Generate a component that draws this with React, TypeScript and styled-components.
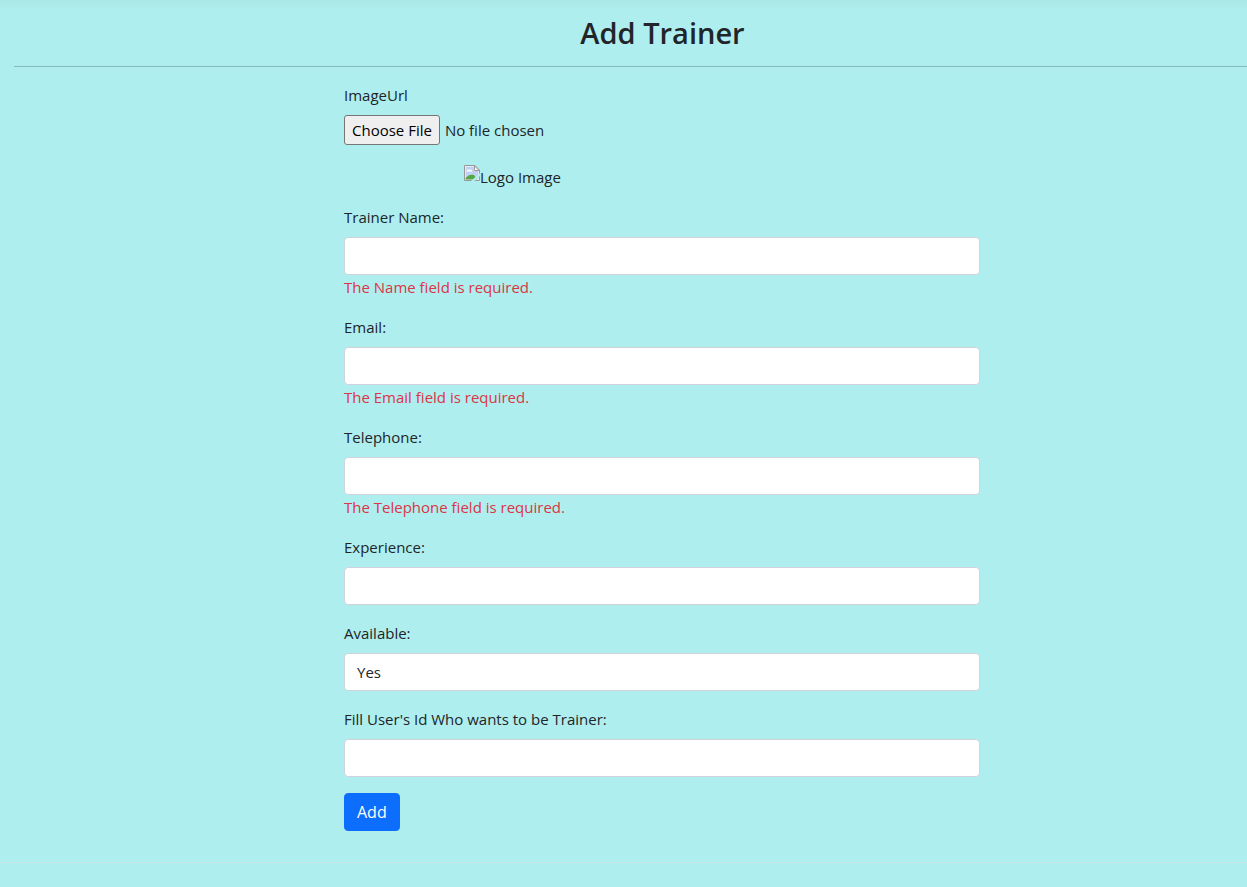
import React from "react";
import styled, { createGlobalStyle } from "styled-components";

const Global = createGlobalStyle`
  *, *::before, *::after { box-sizing: border-box; }
  body {
    margin: 0;
    background: #afeeee;
    color: #212529;
    font: 400 15px/24px "Segoe UI", "Open Sans", "Noto Sans", sans-serif;
  }
`;

const Page = styled.div`
  min-height: 100vh;
  background: linear-gradient(rgba(0, 0, 0, 0.03), transparent 10px);
`;

const Main = styled.main`
  padding: 14px 0 31px 14px;
`;

const Title = styled.h1`
  margin: 0 0 14px;
  padding-left: 64px;
  font-size: 29px;
  line-height: 38px;
  font-weight: 600;
  text-align: center;
`;

const Rule = styled.hr`
  height: 1px;
  margin: 0 0 16px;
  border: 0;
  background: #84bcbd;
`;

const Columns = styled.div`
  display: grid;
  grid-template-columns: 330fr 636fr 267fr;
`;

const Form = styled.form`
  grid-column: 2;
`;

const Group = styled.div`
  margin-bottom: 16px;
`;

const Label = styled.label`
  display: block;
  margin-bottom: 8px;
`;

const FileInput = styled.input`
  display: block;
  width: 100%;
  font: inherit;
  color: inherit;

  &::file-selector-button {
    height: 30px;
    margin-right: 5px;
    padding: 1px 7px;
    border: 1px solid #767676;
    border-radius: 3px;
    background: #efefef;
    color: #000;
    font: inherit;
  }
`;

const Preview = styled.div`
  display: flex;
  margin: 20px 0 16px 120px;
`;

const BrokenIcon = styled.svg`
  flex: none;
`;

const control = `
  display: block;
  width: 100%;
  height: 38px;
  padding: 6px 12px;
  border: 1px solid #ced4da;
  border-radius: 4px;
  background: #fff;
  color: #212529;
  font: inherit;
`;

const Input = styled.input`${control}`;
const Select = styled.select`${control} appearance: none;`;

const ErrorText = styled.span`
  display: block;
  color: #dc3545;
`;

const Button = styled.button`
  height: 38px;
  padding: 6px 12px;
  border: 1px solid #0d6efd;
  border-radius: 4px;
  background: #0d6efd;
  color: #fff;
  font: inherit;
  font-size: 16px;
`;

const Footer = styled.footer`
  height: 24px;
  border-top: 1px solid #c8e5e8;
`;

function Field({ id, label, error, type = "text" }: { id: string; label: string; error?: string; type?: string }) {
  return (
    <Group>
      <Label htmlFor={id}>{label}</Label>
      <Input id={id} type={type} />
      {error && <ErrorText>{error}</ErrorText>}
    </Group>
  );
}

export default function App() {
  return (
    <Page>
      <Global />
      <Main>
        <Title>Add Trainer</Title>
        <Rule />
        <Columns>
          <Form noValidate onSubmit={(e) => e.preventDefault()}>
            <Label htmlFor="image">ImageUrl</Label>
            <FileInput id="image" type="file" />
            <Preview>
              <BrokenIcon width="16" height="16" viewBox="0 0 16 16" aria-hidden="true">
                <path d="M.5.5H11L15.5 5v10.500H.5z" fill="#fff" />
                <path d="M1.500 1.500h9V6H14.500v8.500h-13z" fill="#c1d1f3" />
                <path d="M2.500 6.500c0-2 2-2.500 2.500-1.500 1.500-1.500 3.500 0 3 1.500z" fill="#fff" />
                <path d="M1.500 14.500v-1c1.500-3 5-4.500 8.500-3.500l3 4.500z" fill="#53a93f" />
                <path d="M.5 15.500V.5H11L15.500 5v10.500z" fill="none" stroke="#999" />
                <path d="M10.500 1v4.500H15z" fill="#fff" stroke="#999" />
                <path d="M7 16L16 8v3L10.500 16z" fill="#afeeee" />
              </BrokenIcon>
              <span>Logo Image</span>
            </Preview>
            <Field id="name" label="Trainer Name:" error="The Name field is required." />
            <Field id="email" label="Email:" type="email" error="The Email field is required." />
            <Field id="telephone" label="Telephone:" type="tel" error="The Telephone field is required." />
            <Field id="experience" label="Experience:" />
            <Group>
              <Label htmlFor="available">Available:</Label>
              <Select id="available" defaultValue="Yes">
                <option>Yes</option>
                <option>No</option>
              </Select>
            </Group>
            <Field id="user" label="Fill User's Id Who wants to be Trainer:" />
            <Button type="submit">Add</Button>
          </Form>
        </Columns>
      </Main>
      <Footer />
    </Page>
  );
}
